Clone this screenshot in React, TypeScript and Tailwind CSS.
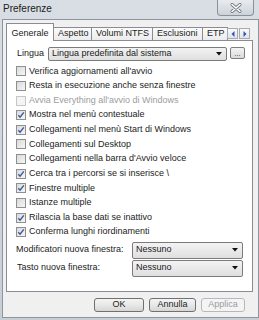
import type { ReactNode } from 'react'

const OPTIONS: { label: string; checked?: boolean; disabled?: boolean }[] = [
  { label: "Verifica aggiornamenti all'avvio" },
  { label: 'Resta in esecuzione anche senza finestre' },
  { label: "Avvia Everything all'avvio di Windows", disabled: true },
  { label: 'Mostra nel menù contestuale', checked: true },
  { label: 'Collegamenti nel menù Start di Windows', checked: true },
  { label: 'Collegamenti sul Desktop' },
  { label: "Collegamenti nella barra d'Avvio veloce" },
  { label: 'Cerca tra i percorsi se si inserisce \\', checked: true },
  { label: 'Finestre multiple', checked: true },
  { label: 'Istanze multiple' },
  { label: 'Rilascia la base dati se inattivo', checked: true },
  { label: 'Conferma lunghi riordinamenti', checked: true }
]

function CheckBox ({ checked, disabled }: { checked?: boolean; disabled?: boolean }) {
  return (
    <div
      className={`w-[10px] h-[10px] shrink-0 border ${
        disabled
          ? 'border-[#c6c6c6] bg-[#f4f4f4]'
          : 'border-[#8e8f8f] bg-gradient-to-br from-[#dadada] to-[#f6f6f6]'
      }`}
    >
      {checked && (
        <svg width="8" height="8" viewBox="0 0 8 8">
          <path d="M1.3 4.2 L3.1 6.2 L6.8 1.3" fill="none" stroke="#3a5a9c" strokeWidth="1.4" />
        </svg>
      )}
    </div>
  )
}

function Combo ({ text, className }: { text: string; className: string }) {
  return (
    <div
      className={`flex items-center justify-between rounded-[2px] border border-[#7b7b7b] bg-gradient-to-b from-[#f3f3f3] to-[#dfdfdf] pl-[3px] pr-[4px] ${className}`}
    >
      <span>{text}</span>
      <svg width="6" height="4" viewBox="0 0 6 4">
        <path d="M0 0 L6 0 L3 3.5 Z" fill="#111" />
      </svg>
    </div>
  )
}

function Button ({ children, width, disabled }: { children: ReactNode; width: string; disabled?: boolean }) {
  return (
    <div
      className={`flex h-[14px] items-center justify-center rounded-[3px] border ${width} ${
        disabled
          ? 'border-[#b5b9bd] bg-[#f4f4f4] text-[#9b9b9b]'
          : 'border-[#707070] bg-gradient-to-b from-[#f4f4f4] via-[#e8e8e8] to-[#d6d6d6]'
      }`}
    >
      {children}
    </div>
  )
}

function Tab ({ label, width, selected }: { label: string; width: string; selected?: boolean }) {
  if (selected) {
    return (
      <div
        className={`relative z-10 -mb-px flex h-[18px] items-start justify-center border border-b-0 border-[#898c95] bg-white pt-[3px] ${width}`}
      >
        {label}
      </div>
    )
  }
  return (
    <div
      className={`-ml-px flex h-[13px] items-center overflow-hidden whitespace-nowrap border border-b-0 border-[#898c95] bg-gradient-to-b from-[#fbfbfb] to-[#ececec] pl-[4px] ${width}`}
    >
      {label}
    </div>
  )
}

export default function App () {
  return (
    <div className="relative flex h-[320px] w-[259px] flex-col overflow-hidden bg-gradient-to-b from-[#d9dee4] to-[#c7ced6] font-['Liberation_Sans',Arial,sans-serif] text-[9px] text-[#1b1b1b]">
      <div className="h-[19px] shrink-0 pl-[3px] pt-[3px] text-[10px] leading-[11px] text-[#222]">
        Preferenze
      </div>
      <div className="absolute right-[5px] top-0 flex h-[16px] w-[37px] items-center justify-center rounded-b-[4px] border border-t-0 border-[#8b9199] bg-gradient-to-b from-[#e8ebef] to-[#cdd3da]">
        <svg width="12" height="10" viewBox="0 0 12 10">
          <path d="M2 1.5 L10 8.5 M10 1.5 L2 8.5" stroke="#6d737a" strokeWidth="3" strokeLinecap="round" />
          <path d="M2 1.5 L10 8.5 M10 1.5 L2 8.5" stroke="#ffffff" strokeWidth="1.6" strokeLinecap="round" />
        </svg>
      </div>

      <div className="mb-[2px] ml-[2px] flex w-[257px] flex-1 flex-col border border-[#8f959c] bg-[#f0f0f0]">
        <div className="relative flex h-[20px] items-end pl-[3px]">
          <Tab label="Generale" width="w-[48px]" selected />
          <Tab label="Aspetto" width="w-[39px]" />
          <Tab label="Volumi NTFS" width="w-[62px]" />
          <Tab label="Esclusioni" width="w-[51px]" />
          <Tab label="ETP" width="w-[26px]" />
          <div className="absolute left-[224px] top-[8px] flex gap-px">
            <div className="flex h-[11px] w-[11px] items-center justify-center border border-[#a7abb0] bg-gradient-to-b from-[#fafafa] to-[#e4e4e4]">
              <svg width="4" height="6" viewBox="0 0 4 6">
                <path d="M3.5 0 L3.5 6 L0.5 3 Z" fill="#2b57c0" />
              </svg>
            </div>
            <div className="flex h-[11px] w-[11px] items-center justify-center border border-[#a7abb0] bg-gradient-to-b from-[#fafafa] to-[#e4e4e4]">
              <svg width="4" height="6" viewBox="0 0 4 6">
                <path d="M0.5 0 L0.5 6 L3.5 3 Z" fill="#2b57c0" />
              </svg>
            </div>
          </div>
        </div>

        <div className="ml-[3px] flex h-[252px] w-[247px] flex-col border border-[#898c95] bg-white pl-[9px] pt-[6px]">
          <div className="flex h-[14px] items-center">
            <span className="ml-px">Lingua</span>
            <Combo text="Lingua predefinita dal sistema" className="ml-[4px] h-[14px] w-[179px]" />
            <div className="ml-[3px] flex h-[12px] w-[15px] items-center justify-center self-start rounded-[2px] border border-[#7e7e7e] bg-gradient-to-b from-[#f4f4f4] to-[#dadada] text-[7px] leading-none">
              ...
            </div>
          </div>

          <div className="mt-[3px] flex flex-col">
            {OPTIONS.map((o) => (
              <div key={o.label} className="flex h-[14.64px] items-center">
                <CheckBox checked={o.checked} disabled={o.disabled} />
                <span className={`ml-[3px] whitespace-nowrap ${o.disabled ? 'text-[#9d9d9d]' : ''}`}>{o.label}</span>
              </div>
            ))}
          </div>

          <div className="mt-[2px] flex h-[17px] items-center">
            <span className="w-[116px]">Modificatori nuova finestra:</span>
            <Combo text="Nessuno" className="h-[17px] w-[111px]" />
          </div>
          <div className="mt-[1px] flex h-[17px] items-center">
            <span className="ml-px w-[115px]">Tasto nuova finestra:</span>
            <Combo text="Nessuno" className="h-[17px] w-[111px]" />
          </div>
        </div>

        <div className="mt-[6px] flex justify-end gap-[5px] pr-[13px]">
          <Button width="w-[50px]">OK</Button>
          <Button width="w-[47px]">Annulla</Button>
          <Button width="w-[44px]" disabled>Applica</Button>
        </div>
      </div>
    </div>
  )
}
